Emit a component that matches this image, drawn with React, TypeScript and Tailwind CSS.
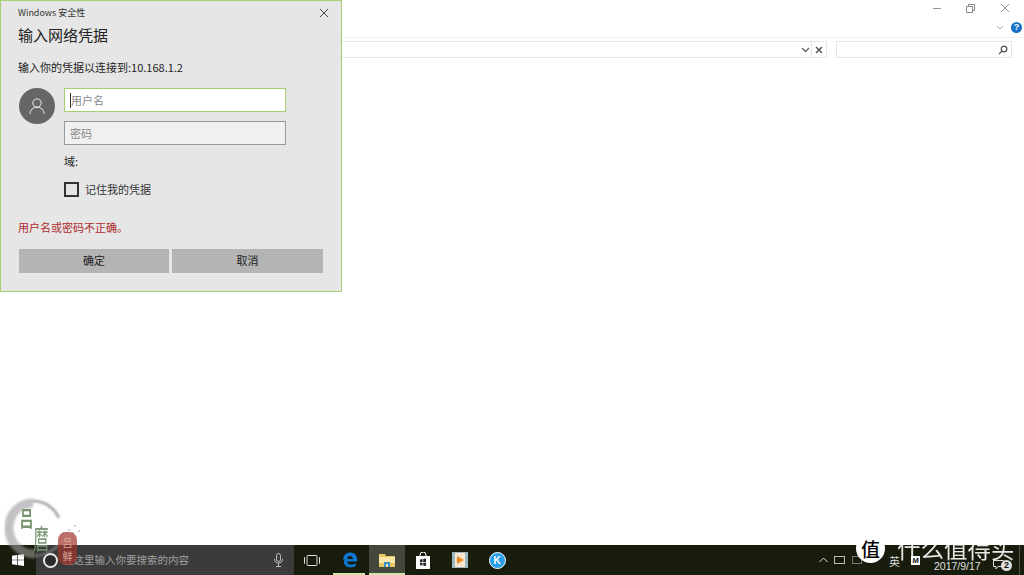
import React from "react";

const F = { fontFamily: '"Noto Sans CJK SC", sans-serif' };

function Dialog() {
  return (
    <div className="absolute left-0 top-0 w-[342px] h-[292px] bg-[#e6e6e6] border border-[#a5cf70] flex flex-col pl-[18px] pr-[18px] text-[#222]">
      <div className="flex justify-between items-center h-[23px] -ml-[1px]">
        <span className="text-[9px] text-[#333]">Windows 安全性</span>
        <svg width="10" height="10" viewBox="0 0 10 10" className="mr-[-6px]" stroke="#444" fill="none"><path d="M1 1l8 8M9 1l-8 8" /></svg>
      </div>
      <div className="text-[15px] leading-[22px] -ml-[1px] text-[#222]">输入网络凭据</div>
      <div className="text-[11px] leading-[16px] mt-[13px] -ml-[1px] text-[#222]">输入你的凭据以连接到:10.168.1.2</div>
      <div className="flex mt-[13px] gap-[9px]">
        <div className="w-[36px] h-[36px] rounded-full bg-[#666] flex items-center justify-center">
          <svg width="18" height="18" viewBox="0 0 18 18" fill="none" stroke="#eee" strokeWidth="1"><circle cx="9" cy="6" r="4.200" /><path d="M2 17c0-4 3-6.800 7-6.800s7 2.800 7 6.800" /></svg>
        </div>
        <div className="flex flex-col w-[222px]">
          <div className="h-[24px] bg-white border border-[#a5cf70] flex items-center pl-[5px] text-[11px] text-[#888]">
            <span className="w-px h-[15px] bg-[#333]" />用户名
          </div>
          <div className="h-[24px] mt-[9px] bg-[#f0f0f0] border border-[#999] flex items-center pl-[5px] text-[11px] text-[#888]">密码</div>
          <div className="text-[11px] leading-[16px] mt-[8px] text-[#222]">域:</div>
          <div className="flex items-center mt-[12px] gap-[6px]">
            <div className="w-[15px] h-[15px] border-2 border-[#333]" />
            <span className="text-[11px] text-[#333]">记住我的凭据</span>
          </div>
        </div>
      </div>
      <div className="text-[11px] leading-[16px] mt-[21px] -ml-[1px] text-[#b02a2a]">用户名或密码不正确。</div>
      <div className="flex gap-[3px] mt-[14px]">
        <div className="w-[150px] h-[24px] bg-[#b4b4b4] flex items-center justify-center text-[11px] text-[#222]">确定</div>
        <div className="w-[151px] h-[24px] bg-[#b4b4b4] flex items-center justify-center text-[11px] text-[#222]">取消</div>
      </div>
    </div>
  );
}

function TitleBar() {
  return (
    <div className="h-[38px] border-b border-[#efefef] relative">
      <div className="flex justify-end items-center h-[16px] pr-[14px] gap-[25px]">
        <span className="w-[8px] h-px bg-[#999]" />
        <svg width="9" height="9" viewBox="0 0 9 9" fill="none" stroke="#888"><path d="M.5 2.500h6v6h-6zM2.500 2.500v-2h6v6h-2" /></svg>
        <svg width="10" height="10" viewBox="0 0 10 10" fill="none" stroke="#999"><path d="M1 1l8 8M9 1l-8 8" /></svg>
      </div>
      <div className="flex justify-end items-center h-[16px] mt-[3px] pr-[2px] gap-[7px]">
        <svg width="8" height="5" viewBox="0 0 8 5" fill="none" stroke="#aaa"><path d="M1 1l3 3 3-3" /></svg>
        <div className="w-[11px] h-[11px] rounded-full bg-[#1572c4] text-white text-[9px] font-bold leading-[11px] text-center" style={{ fontFamily: '"Liberation Sans"' }}>?</div>
      </div>
    </div>
  );
}

function AddressRow() {
  return (
    <div className="flex justify-end h-[17px] mt-[3px] pr-[12px]">
      <div className="flex-1 border border-[#e5e5e5] flex justify-end items-center h-[17px] ml-[340px]">
        <svg width="9" height="6" viewBox="0 0 9 6" fill="none" stroke="#666" strokeWidth="1.4" className="mr-[1px]"><path d="M1 1l3.500 3.500L8 1" /></svg>
        <div className="w-[15px] h-full border-l border-[#e5e5e5] flex items-center justify-center">
          <svg width="8" height="8" viewBox="0 0 8 8" fill="none" stroke="#555" strokeWidth="1.5"><path d="M1 1l6 6M7 1l-6 6" /></svg>
        </div>
      </div>
      <div className="w-[176px] ml-[9px] border border-[#e5e5e5] flex justify-end items-center pr-[3px]">
        <svg width="10" height="10" viewBox="0 0 10 10" fill="none" stroke="#555" strokeWidth="1.3"><circle cx="6" cy="4" r="2.800" /><path d="M4 6L1 9" /></svg>
      </div>
    </div>
  );
}

function WinLogo() {
  return (
    <svg width="12" height="12" viewBox="0 0 12 12" fill="#fff"><path d="M0 1.800L5 1v4.700H0zM5.700 .9L12 0v5.700H5.700zM0 6.300h5V11l-5-.8zM5.700 6.300H12V12l-6.300-.9z" /></svg>
  );
}

function Taskbar() {
  return (
    <div className="h-[30px] bg-[#171c0d] flex items-center text-white shrink-0">
      <div className="w-[36px] flex justify-center"><WinLogo /></div>
      <div className="w-[258px] h-full bg-[#3b3b3b] flex items-center">
        <div className="w-[15px] h-[15px] ml-[7px] rounded-full border-[2px] border-[#e8e8e8] bg-[#2c2c2c] shrink-0" />
        <span className="text-[10.5px] text-[#a0a0a0] ml-[5px] flex-1">在这里输入你要搜索的内容</span>
        <svg width="9" height="14" viewBox="0 0 9 14" fill="none" stroke="#bbb" className="mr-[11px]"><rect x="2.500" y=".5" width="4" height="8" rx="2" /><path d="M.5 6c0 3 2 4 4 4s4-1 4-4M4.500 10v3M2 13.500h5" /></svg>
      </div>
      <div className="w-[36px] flex justify-center">
        <svg width="16" height="11" viewBox="0 0 16 11" fill="none" stroke="#ddd"><rect x="3" y=".5" width="10" height="10" rx="1" /><path d="M1 2.500H.5v6H1M15 2.500h.5v6H15" /></svg>
      </div>
      <div className="w-[39px] h-full flex items-center justify-center relative">
        <svg width="16" height="16" viewBox="0 0 16 16"><path d="M1 7.500C1.600 3 4.600.6 8.400.6c4 0 6.800 2.900 6.800 7.600v1.300H5c.2 2.100 1.900 3.100 4 3.100 1.900 0 3.400-.5 4.700-1.300v3c-1.400.7-3.100 1.100-5.200 1.100C4.500 15.400 2 13 2 9.700c0-1 .2-1.900.6-2.500-.5.100-1 .200-1.600.300zM5.100 7h5.800c0-1.800-1.100-3-2.700-3-1.700 0-2.900 1.200-3.100 3z" fill="#0f78d4" /></svg>
        <span className="absolute bottom-0 left-[3px] right-[4px] h-[2px] bg-[#cfe3a8]" />
      </div>
      <div className="w-[36px] h-full bg-[#44483c] flex items-center justify-center relative">
        <svg width="16" height="14" viewBox="0 0 16 14"><path d="M0 1h6l1 2h9v11H0z" fill="#e9c766" /><rect x="0" y="4" width="16" height="6" fill="#f9e7a6" /><rect x="5" y="9" width="6" height="5" fill="#3a8fc4" /><rect x="7" y="11" width="2" height="3" fill="#f9e7a6" /></svg>
        <span className="absolute bottom-0 left-0 right-0 h-[2px] bg-[#cfe3a8]" />
      </div>
      <div className="w-[36px] flex justify-center">
        <svg width="14" height="17" viewBox="0 0 14 17"><path d="M4 4V3a3 3 0 016 0v1" fill="none" stroke="#fff" /><path d="M0 4h14v13H0z" fill="#fff" /><path d="M4 7.500l2.500-.4V10H4zM7.200 7l2.800-.4V10H7.200zM4 10.700h2.500v2.800L4 13.200zM7.200 10.700H10V14l-2.800-.4z" fill="#222" /></svg>
      </div>
      <div className="w-[38px] flex justify-center">
        <svg width="16" height="16" viewBox="0 0 16 16"><rect width="16" height="16" fill="#9fb6c2" /><rect x="3" y="1" width="10" height="14" fill="#fbe6cf" /><path d="M5 4l7 4-7 4z" fill="#ee8a2a" /></svg>
      </div>
      <div className="w-[36px] flex justify-center">
        <div className="w-[17px] h-[17px] rounded-full bg-[#2a9fe6] border border-white flex items-center justify-center text-[10px] font-bold" style={{ fontFamily: '"Liberation Sans"' }}>K</div>
      </div>
      <div className="flex-1" />
      <div className="flex items-center h-full relative w-[206px] text-[#ddd]">
        <svg width="9" height="6" viewBox="0 0 9 6" fill="none" stroke="#ddd" className="ml-[1px]"><path d="M.5 5l4-4 4 4" /></svg>
        <span className="w-[11px] h-[8px] border border-[#bbb] ml-[6px]" />
        <span className="w-[10px] h-[8px] border border-[#777] ml-[7px]" />
        <span className="text-[11px] ml-[27px] mt-[2px]">英</span>
        <span className="w-[9px] h-[9px] ml-[11px] bg-white text-[#111] text-[8px] font-bold leading-[9px] text-center" style={{ fontFamily: '"Liberation Sans"' }}>M</span>
        <span className="text-[10.5px] ml-[14px] mt-[13px] text-[#e0e0e0] whitespace-nowrap" style={{ fontFamily: '"Liberation Sans"' }}>2017/9/17</span>
        <svg className="absolute right-[20px] bottom-[5px]" width="11" height="10" viewBox="0 0 11 10" fill="none" stroke="#ddd"><path d="M.5.5h10v6H5L3 9V6.500H.5z" /></svg>
        <div className="absolute right-[12px] bottom-[4px] w-[11px] h-[11px] rounded-full bg-[#ddd] text-[#111] text-[9px] font-bold leading-[11px] text-center" style={{ fontFamily: '"Liberation Sans"' }}>2</div>
        <div className="absolute right-[4px] top-0 bottom-0 w-px bg-[#555]" />
      </div>
    </div>
  );
}

function Watermarks() {
  return (
    <>
      <div className="absolute left-[856px] top-[534px] w-[29px] h-[29px] rounded-full bg-white text-black text-[19px] leading-[29px] text-center font-medium">值</div>
      <div className="absolute left-[897px] top-[530px] text-white text-[23.5px] leading-[36px] whitespace-nowrap opacity-90">什么值得买</div>
      <svg className="absolute left-[3px] top-[497px]" width="82" height="66" viewBox="0 0 82 66" fill="none">
        <defs>
          <filter id="b"><feGaussianBlur stdDeviation="1" /></filter>
        </defs>
        <g filter="url(#b)">
          <path d="M30 6C16 6 6 17 6 31s10 26 26 26" stroke="#9a9a9a" strokeOpacity=".6" strokeWidth="9" />
          <path d="M30 4c11 0 21 6 26 17" stroke="#777" strokeOpacity=".7" strokeWidth="2.500" />
          <path d="M32 59c10-1 19-5 24-12" stroke="#aaa" strokeOpacity=".6" strokeWidth="2" />
        </g>
        <g fill="#9a9a9a">
          <circle cx="60" cy="36" r=".8" /><circle cx="66" cy="33" r=".8" /><circle cx="72" cy="29" r=".8" /><circle cx="76" cy="34" r=".8" /><circle cx="70" cy="36" r=".8" />
        </g>
      </svg>
      <div className="absolute left-[19px] top-[505px] w-[15px] h-[23px] flex items-center justify-center text-[#76946f] text-[14px] leading-[14px] font-bold scale-y-150">吕</div>
      <div className="absolute left-[33px] top-[523px] w-[16px] h-[29px] flex items-center justify-center text-[#76946f] text-[15px] leading-[15px] font-medium scale-y-[1.8] opacity-90">麿</div>
      <div className="absolute left-[58px] top-[532px] w-[19px] h-[33px] rounded-[8px] bg-[#a3352a]/70 flex flex-col items-center justify-center text-[#d9a89c] text-[10px] leading-[13px]">
        <span>吕</span><span>鲜</span>
      </div>
    </>
  );
}

export default function App() {
  return (
    <div className="relative w-[1024px] h-[575px] overflow-hidden bg-white flex flex-col" style={F}>
      <div className="flex-1 flex flex-col">
        <TitleBar />
        <AddressRow />
      </div>
      <Taskbar />
      <Dialog />
      <Watermarks />
    </div>
  );
}
